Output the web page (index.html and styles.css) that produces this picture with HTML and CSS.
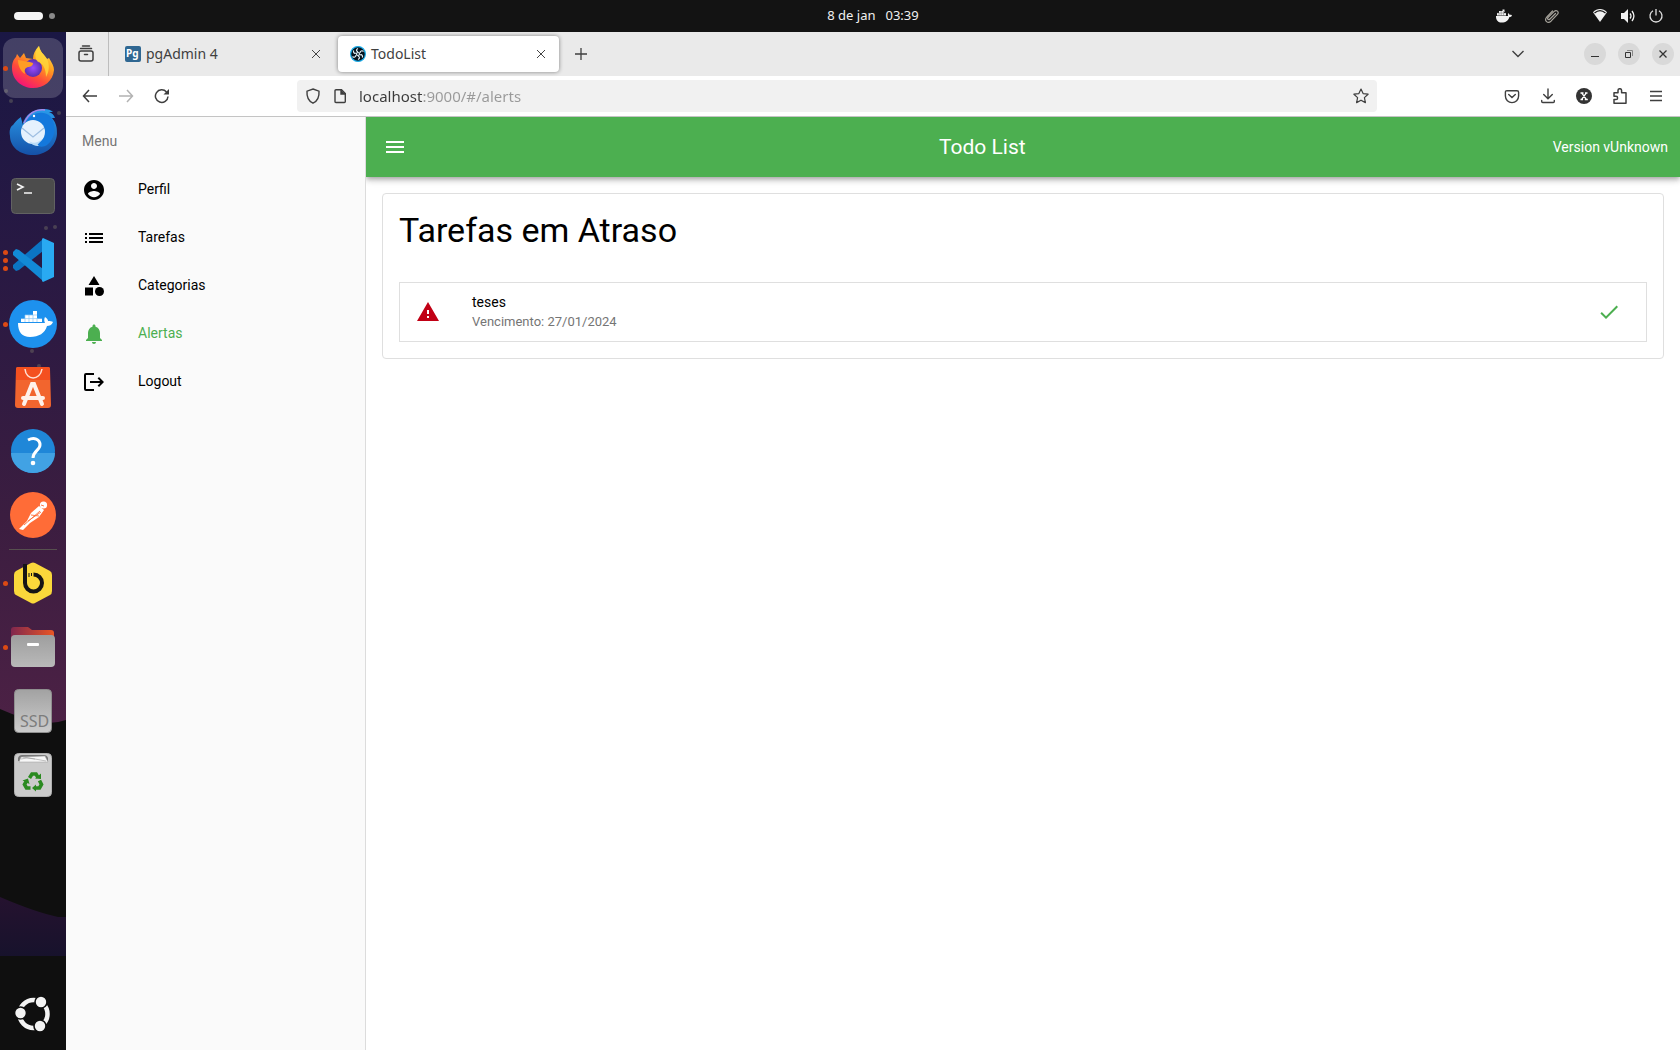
FILE: index.html
```html
<!DOCTYPE html>
<html lang="pt-BR">
<head>
<meta charset="utf-8">
<title>TodoList</title>
<link rel="stylesheet" href="styles.css">
</head>
<body>
<div class="desktop">
  <header class="panel">
    <button class="workspaces" aria-label="Atividades"><span class="pill"></span><span class="dot"></span></button>
    <button class="clock"><span>8 de jan</span><span>03:39</span></button>
    <div class="tray">
      <svg class="tray-docker" width="16" height="16" viewBox="0 0 16 16" fill="#f2f2f2"><path d="M0 8h12c0-1-.4-1.800.3-2.800.9.4 1.200 1 1.300 1.700.9-.1 1.800 0 2.400.5-.5 1.100-1.500 1.500-2.600 1.500C12.500 12 10 14.500 5.500 14.500 2 14.500-.2 12 0 8zM1 5h9v2.400H1zM3 3h5v2H3zM6.500 1.500h2V4h-2z"/><path d="M3 5v2.500M5.200 3v4.500M7.500 3v4.500M1 5h9" stroke="#555" stroke-width=".4"/></svg>
      <svg class="tray-clip" width="16" height="16" viewBox="0 0 16 16" fill="none" stroke="#a7a49c" stroke-width="1.200" stroke-linecap="round"><path d="M11.500 5.500L6 11c-1.500 1.500-3.200 0-1.800-1.600l6-6c2.200-2.200 5.300.6 3.200 3L7 13.200c-3.200 3-7.200-.5-4.300-4L8.500 3"/></svg>
      <svg class="tray-wifi" width="16" height="16" viewBox="0 0 16 16" fill="#f2f2f2"><path d="M1 4.300C5-.1 11-.1 15 4.300L8 14z"/><path d="M2.500 5C6 2 10 2 13.500 5" fill="none" stroke="#131313" stroke-width="1.200"/></svg>
      <svg class="tray-volume" width="16" height="16" viewBox="0 0 16 16" fill="#f2f2f2"><path d="M1 5h3l4-4v14l-4-4H1z"/><path d="M10 5.500q2 2.500 0 5M12 3q3.800 5 0 10" fill="none" stroke="#f2f2f2" stroke-width="1.300"/></svg>
      <svg width="16" height="16" viewBox="0 0 16 16" fill="none" stroke="#e0e0e0" stroke-width="1.300"><path d="M5 2.800a6 6 0 1 0 6 0M8 1v6.500"/></svg>
    </div>
  </header>

  <div class="workspace">
    <nav class="dock" aria-label="Dock">
      <svg class="wallpaper" viewBox="0 0 66 1018" preserveAspectRatio="none" aria-hidden="true">
        <defs>
          <linearGradient id="wall" x2="0" y2="1"><stop offset="0" stop-color="#1a1744"/><stop offset=".35" stop-color="#291943"/><stop offset=".7" stop-color="#3b1d40"/><stop offset="1" stop-color="#4c2145"/></linearGradient>
          <linearGradient id="wedge" x2="0" y2="1"><stop offset="0" stop-color="#25122f"/><stop offset="1" stop-color="#17122c"/></linearGradient>
        </defs>
        <path fill="#0f0f0f" d="M0 0h66v1018H0z"/>
        <path fill="url(#wall)" d="M0 0h66v688q-12 4-22 2Q22 687 0 677z"/>
        <path fill="url(#wedge)" d="M0 865q35 15 58 20h8v39H0z"/>
        <g fill="#8a8a70" opacity=".35"><circle cx="6" cy="59" r="2"/><circle cx="11" cy="69" r="2"/><circle cx="59" cy="81" r="2"/><circle cx="55" cy="195" r="2"/><circle cx="46" cy="196" r="2"/><circle cx="32" cy="319" r="2"/><circle cx="39" cy="334" r="2"/></g>
      </svg>
      <ul class="dock-list">
        <li><button class="app app-active" aria-label="Firefox"><span class="running"><i></i></span>
          <svg width="48" height="48" viewBox="0 0 48 48"><defs><linearGradient id="ff" x1=".9" y1="0" x2=".3" y2="1"><stop offset="0" stop-color="#fff44f"/><stop offset=".4" stop-color="#ffa01f"/><stop offset=".7" stop-color="#ff4b3a"/><stop offset="1" stop-color="#f2127a"/></linearGradient><radialGradient id="ffp"><stop offset="0" stop-color="#9a4bff"/><stop offset="1" stop-color="#5b2eaf"/></radialGradient></defs>
          <path fill="url(#ff)" d="M3 24c0-6 2-9 4-11l1-3 3 4 4-5 2 5 7 1c0-5 2-9 6-13 1 6 5 8 8 13l2-1c3 5 5 8 5 12-1 11-10 18-21 18S3 36 3 24z"/><circle cx="24" cy="24" r="9" fill="url(#ffp)"/><path fill="#ff9d25" d="M9 16c4 1 9 1 15 3 0 3-3 4-5 4-3 1-4 3-3 7-5-3-7-9-7-14z"/><path fill="#ffd83c" opacity=".8" d="M30 2c1 6 5 8 8 13 3 6 2 13-1 18 0-8-3-14-8-15-4-3-3-12 1-16z"/></svg></button></li>
        <li><button class="app" aria-label="Thunderbird">
          <svg width="50" height="50" viewBox="0 0 50 50"><defs><linearGradient id="tb" x2="0" y2="1"><stop offset="0" stop-color="#2a9bea"/><stop offset="1" stop-color="#1551a8"/></linearGradient></defs>
          <path fill="url(#tb)" d="M2 29c-1-5 0-9 3-11 2-3 4-5 8-8 0 3 2 4 1 8C18 7 25 2 36 2c4 0 7 1 9 3h-4c3 1 5 3 6 6h-3c5 6 5 11 5 16-1 13-12 21-24 21C12 48 2 40 2 29z"/><path fill="none" stroke="#a787e8" stroke-width="1.500" d="M16 16C21 6 27 2 37 3"/><path fill="#1478dc" d="M18 15c6-10 18-12 25-5 6 9 4 22-4 28-3 2-6 2-9 1l-8-18z"/><circle cx="25" cy="25" r="12" fill="#e5f1fd"/><path d="M14 21l11 9 11-9" fill="none" stroke="#9fbfe2" stroke-width="1.300"/><path fill="#b9dcf8" d="M21 34c4 3 9 2 13-2-3 6-6 5-3 7-5 0-8-2-10-5z"/><circle cx="26" cy="9" r="1.200" fill="#fff"/></svg></button></li>
        <li><button class="app" aria-label="Terminal">
          <svg width="48" height="48" viewBox="0 0 48 48"><rect x="2.500" y="6.500" width="43" height="35" rx="4" fill="#4c4c4c" stroke="#626262"/><path d="M8 12l6 3-6 3M15 21h8" fill="none" stroke="#f5f5f5" stroke-width="1.600"/></svg></button></li>
        <li><button class="app" aria-label="Visual Studio Code"><span class="running"><i></i><i></i><i></i></span>
          <svg width="48" height="48" viewBox="0 0 48 48"><path fill="#0b74c4" d="M34 3L4 29v3l3 3 3-1 24-19z"/><path fill="#128ad6" d="M34 45L4 19v-3l3-3 3 1 24 19z"/><path fill="#29aaf2" d="M33 3l1-1 11 5v34l-11 5-1-1z"/></svg></button></li>
        <li><button class="app" aria-label="Docker Desktop"><span class="running"><i></i></span>
          <svg width="48" height="48" viewBox="0 0 48 48"><circle cx="24" cy="24" r="24" fill="#1d91ee"/><path fill="#fff" d="M9 23h27c-1-2-1-4 0-6 2 1 3 3 3 4 2 0 4 0 5 1-1 3-4 4-6 4-2 7-8 11-17 11-8 0-12-5-12-14z"/><path fill="#fff" d="M12 19h4v3h-4zM16 15h4v7h-4zM20 15h4v7h-4zM24 11h4v11h-4zM28 19h5v3h-5z"/><path stroke="#8cc7f5" stroke-width=".7" d="M16 15v7M20 15v7M24 15v7M28 18v4M12 18.600h21M16 15h12"/></svg></button></li>
        <li><button class="app" aria-label="App Center">
          <svg width="48" height="48" viewBox="0 0 48 48"><path fill="#f2652e" d="M9 3h30q2 0 2 2l1 36q0 3-3 3H9q-3 0-3-3L7 5q0-2 2-2z"/><path fill="#f4501f" d="M9 3h30q2 0 2 2v11H7V5q0-2 2-2z"/><path d="M16 5c1 12 15 12 17 0" fill="none" stroke="#ffe1d4" stroke-width="1.500"/><path d="M15 40l8-20h2l8 20M14 34h20" fill="none" stroke="#fff1ea" stroke-width="4" stroke-linecap="round"/></svg></button></li>
        <li><button class="app" aria-label="Ajuda">
          <svg width="48" height="48" viewBox="0 0 48 48"><circle cx="24" cy="23" r="22" fill="#1f87d8"/><path fill="#41a2e4" d="M2 25h44a22 20 0 0 1-44 0z"/><path d="M19 12c6-3 12-1 12 5 0 5-7 6-7 13" fill="none" stroke="#fff" stroke-width="3"/><circle cx="24" cy="35" r="2.300" fill="#fff"/></svg></button></li>
        <li><button class="app" aria-label="Postman">
          <svg width="48" height="48" viewBox="0 0 48 48"><circle cx="24" cy="23" r="23" fill="#ff6c37"/><circle cx="34.500" cy="13" r="3.600" fill="#fff"/><path fill="#fff" d="M30 14l5 4-5 7-9 6-7 7-4-1 8-8 4-8z"/><path d="M15 33l16-14M19 29l13-9M22 23l8 1M32 13l3 1" stroke="#ff6c37" stroke-width=".9"/></svg></button></li>
      </ul>
      <hr class="dock-rule">
      <ul class="dock-list">
        <li><button class="app" aria-label="Beekeeper Studio"><span class="running"><i></i></span>
          <svg width="48" height="48" viewBox="0 0 48 48"><path fill="#fad83b" d="M22 4q2-1 4 0l15 8q2 1 2 4v16q0 3-2 4l-15 8q-2 1-4 0L7 36q-2-1-2-4V16q0-3 2-4z"/><path d="M16 5v19a8.500 8.500 0 1 0 8.500-8.500" fill="none" stroke="#151515" stroke-width="4"/><path d="M20 14v4M22.500 14v3" stroke="#151515"/></svg></button></li>
        <li><button class="app" aria-label="Arquivos"><span class="running"><i></i></span>
          <svg width="48" height="48" viewBox="0 0 48 48"><defs><linearGradient id="fo"><stop offset="0" stop-color="#80274e"/><stop offset="1" stop-color="#ea5625"/></linearGradient><linearGradient id="gr" x2="0" y2="1"><stop offset="0" stop-color="#9e9e9e"/><stop offset="1" stop-color="#b9b9b9"/></linearGradient></defs><path fill="url(#fo)" d="M2 7q0-3 3-3h14l4 3h19q3 0 3 3v10H2z"/><rect x="2" y="12" width="44" height="32" rx="4" fill="url(#gr)"/><rect x="18" y="20" width="12" height="3" rx="1" fill="#fff"/></svg></button></li>
        <li><button class="app" aria-label="Disco SSD">
          <svg width="48" height="48" viewBox="0 0 48 48"><defs><linearGradient id="ssd" x2="0" y2="1"><stop offset="0" stop-color="#a2a2a2"/><stop offset="1" stop-color="#cccccc"/></linearGradient></defs><rect x="5.500" y="2.500" width="37" height="43" rx="4" fill="url(#ssd)" stroke="#8f8f8f"/><text x="11" y="40" class="ssd-label">SSD</text></svg></button></li>
        <li><button class="app" aria-label="Lixeira">
          <svg width="48" height="48" viewBox="0 0 48 48"><rect x="5.500" y="2.500" width="37" height="43" rx="4" fill="#cbcbcb" stroke="#b0b0b0"/><path fill="#777" d="M9 7q1-3 4-3h22q3 0 4 3v3H9z"/><path fill="#f7f7f7" stroke="#999" stroke-width=".5" d="M10 11l2-5 24-1 3 6z"/><path d="M14 6l12 2 11 2M12 8q5-2 14 0" fill="none" stroke="#999" stroke-width=".6"/><g fill="none" stroke="#2a8a20" stroke-width="3.600"><path d="M20.500 27l2.500-4h4l2 3.500M30.500 29.500l2 4-2 3.500h-4M21.500 37h-4l-2-3.500 2-3.500"/></g><path fill="#2a8a20" d="M26 27.500l6 .5v-5.500zM27 33.500v7l-4-3.500zM13.500 29.500l5.500-2 1.500 5.500z"/></svg></button></li>
      </ul>
      <button class="app show-apps" aria-label="Mostrar aplicativos">
        <svg width="40" height="40" viewBox="0 0 40 40"><circle cx="20.500" cy="20" r="14" fill="none" stroke="#f3f3f3" stroke-width="4.500"/><g fill="#f3f3f3" stroke="#0f0f0f" stroke-width="1.600"><circle cx="7.500" cy="19" r="6"/><circle cx="28" cy="8" r="6"/><circle cx="27" cy="32" r="6"/></g></svg></button>
    </nav>

    <div class="browser">
      <div class="tabstrip">
        <button class="view" aria-label="Firefox View"><svg width="18" height="18" viewBox="0 0 18 18" fill="none" stroke="#3f3f3f" stroke-width="1.500" stroke-linecap="round"><rect x="2" y="6" width="14" height="10" rx="2"/><path d="M3.500 3.500h11M5.500 1h7M7.500 9.500h3"/></svg></button>
        <div class="tabs">
          <div class="tab">
            <svg width="16" height="16" viewBox="0 0 16 16"><rect width="16" height="16" rx="2" fill="#2f6792"/><text x="1" y="11" class="pg-label">Pg</text></svg>
            <a class="tab-title" href="#pgadmin">pgAdmin 4</a>
            <button class="tab-close" aria-label="Fechar aba"><svg width="10" height="10" viewBox="0 0 10 10" stroke="#444" stroke-width="1"><path d="M1 1l8 8M9 1L1 9"/></svg></button>
          </div>
          <div class="tab tab-current">
            <svg width="16" height="16" viewBox="0 0 16 16"><circle cx="8" cy="8" r="7.400" fill="#07121c" stroke="#1badea" stroke-width="1.200"/><g fill="none" stroke="#e2f2fa" stroke-width="1.200"><circle cx="8" cy="8" r="1.500"/><path d="M8 6C6 5 6 3.500 8 2.500M10 7c0-2 2-3 3.500-1.500M10 9c2-1 3 1 2.300 2.500M8 10c2 1 2 2.500 0 3.500M6 9c0 2-2 3-3.500 1.500M6 7C4 8 3 6 3.700 4.500"/></g></svg>
            <a class="tab-title" href="#/alerts">TodoList</a>
            <button class="tab-close" aria-label="Fechar aba"><svg width="10" height="10" viewBox="0 0 10 10" stroke="#444" stroke-width="1"><path d="M1 1l8 8M9 1L1 9"/></svg></button>
          </div>
          <button class="new-tab" aria-label="Nova aba"><svg width="12" height="12" viewBox="0 0 12 12" stroke="#3f3f3f" stroke-width="1.300"><path d="M6 0v12M0 6h12"/></svg></button>
        </div>
        <button class="all-tabs" aria-label="Listar abas"><svg width="14" height="8" viewBox="0 0 14 8" fill="none" stroke="#3f3f3f" stroke-width="1.400"><path d="M1.500 1L7 6.500 12.500 1"/></svg></button>
        <div class="window-buttons">
          <button aria-label="Minimizar"><svg width="10" height="10" viewBox="0 0 10 10"><path d="M1 7.500h8" stroke="#333"/></svg></button>
          <button aria-label="Restaurar"><svg width="10" height="10" viewBox="0 0 10 10" fill="none" stroke="#333"><path d="M3 1.500h5.500V7" stroke="#888"/><path d="M1.500 3.500h5v5h-5z"/></svg></button>
          <button aria-label="Fechar"><svg width="10" height="10" viewBox="0 0 10 10" stroke="#333" stroke-width="1.300"><path d="M1.500 1.500l7 7M8.500 1.500l-7 7"/></svg></button>
        </div>
      </div>

      <div class="toolbar">
        <button class="tool" aria-label="Voltar"><svg width="16" height="16" viewBox="0 0 16 16" fill="none" stroke="#3f3f3f" stroke-width="1.500"><path d="M15 8H1.500M7 2L1.500 8 7 14"/></svg></button>
        <button class="tool" aria-label="Avançar" disabled><svg width="16" height="16" viewBox="0 0 16 16" fill="none" stroke="#b3b3b3" stroke-width="1.500"><path d="M1 8h13.500M9 2l5.500 6L9 14"/></svg></button>
        <button class="tool" aria-label="Recarregar"><svg width="16" height="16" viewBox="0 0 16 16" fill="none" stroke="#3f3f3f" stroke-width="1.500"><path d="M14 8.500A6.300 6.300 0 1 1 12.500 4"/><path d="M15 1v5.500H9.500z" fill="#3f3f3f" stroke="none"/></svg></button>
        <div class="urlbar">
          <svg width="16" height="16" viewBox="0 0 16 16" fill="none" stroke="#3f3f3f" stroke-width="1.400"><path d="M8 1l6 2.200c.4 5.300-1.500 9.800-6 12-4.500-2.200-6.400-6.700-6-12z"/></svg>
          <svg width="16" height="16" viewBox="0 0 16 16" fill="none" stroke="#3f3f3f" stroke-width="1.400"><path d="M4 1.700h5.500L13.300 5.500v8q0 1-1 1H4q-1 0-1-1V2.700q0-1 1-1z"/><path d="M9 2v4h4.300" fill="#3f3f3f"/></svg>
          <input class="url" type="text" value="localhost:9000/#/alerts" aria-label="Endereço">
          <svg width="16" height="16" viewBox="0 0 16 16" fill="none" stroke="#3f3f3f" stroke-width="1.200" stroke-linejoin="round"><path d="M8 1l2.100 4.600 5 .6-3.700 3.400 1 5L8 12.200l-4.400 2.400 1-5L.9 6.200l5-.6z"/></svg>
        </div>
        <button class="tool" aria-label="Pocket"><svg width="16" height="16" viewBox="0 0 16 16" fill="none" stroke="#3f3f3f" stroke-width="1.400" stroke-linecap="round"><path d="M3 2.700h10q1.600 0 1.600 1.500V8a6.600 6.600 0 0 1-13.200 0V4.200Q1.400 2.700 3 2.700zM4.700 6.500L8 9.500l3.300-3"/></svg></button>
        <button class="tool" aria-label="Downloads"><svg width="16" height="16" viewBox="0 0 16 16" fill="none" stroke="#3f3f3f" stroke-width="1.400" stroke-linecap="round"><path d="M8 1v9.500M3.700 6.500L8 10.700l4.300-4.200M1.700 12.500v1q0 1 1 1h10.600q1 0 1-1v-1"/></svg></button>
        <button class="tool" aria-label="Extensão X"><svg width="16" height="16" viewBox="0 0 16 16"><circle cx="8" cy="8" r="8" fill="#333"/><path d="M5.500 4.700l5 7M10.500 4.700l-5 7M4.500 5h3M9 5h2.500M4.500 11.500h2.500M8.800 11.500h3" stroke="#fff" stroke-width="1.300"/></svg></button>
        <button class="tool" aria-label="Extensões"><svg width="16" height="16" viewBox="0 0 16 16" fill="none" stroke="#3f3f3f" stroke-width="1.500" stroke-linejoin="round"><path d="M2 4.800h4V2.500a1.800 1.800 0 0 1 3.600 0v2.300H14v10.400H2V11.500h2a1.600 1.600 0 0 0 0-3.200H2z"/></svg></button>
        <button class="tool" aria-label="Menu do Firefox"><svg width="16" height="16" viewBox="0 0 16 16" stroke="#3f3f3f" stroke-width="1.300"><path d="M2 3.500h12M2 8h12M2 12.500h12"/></svg></button>
      </div>

      <div class="page">
        <aside class="drawer">
          <h2 class="drawer-title">Menu</h2>
          <nav>
            <a class="item" href="#/profile"><svg class="md" viewBox="0 0 24 24"><path d="M12 2C6.480 2 2 6.480 2 12s4.480 10 10 10 10-4.480 10-10S17.520 2 12 2zm0 3c1.660 0 3 1.340 3 3s-1.340 3-3 3-3-1.340-3-3 1.340-3 3-3zm0 14.200c-2.500 0-4.710-1.280-6-3.220.03-1.990 4-3.080 6-3.080 1.990 0 5.970 1.090 6 3.080-1.290 1.940-3.500 3.220-6 3.220z"/></svg><span>Perfil</span></a>
            <a class="item" href="#/tasks"><svg class="md" viewBox="0 0 24 24"><path d="M3 13h2v-2H3v2zm0 4h2v-2H3v2zm0-8h2V7H3v2zm4 4h14v-2H7v2zm0 4h14v-2H7v2zM7 7v2h14V7H7z"/></svg><span>Tarefas</span></a>
            <a class="item" href="#/categories"><svg class="md" viewBox="0 0 24 24"><path d="M12 2l-5.500 9h11zM3 13.500h8v8H3z"/><circle cx="17.500" cy="17.500" r="4.500"/></svg><span>Categorias</span></a>
            <a class="item item-current" href="#/alerts"><svg class="md" viewBox="0 0 24 24"><path d="M12 22c1.100 0 2-.9 2-2h-4c0 1.100.89 2 2 2zm6-6v-5c0-3.070-1.640-5.640-4.500-6.320V4c0-.83-.67-1.500-1.500-1.500s-1.500.67-1.500 1.500v.68C7.630 5.360 6 7.920 6 11v5l-2 2v1h16v-1l-2-2z"/></svg><span>Alertas</span></a>
            <a class="item" href="#/logout"><svg class="md" viewBox="0 0 24 24"><path d="M4 3h8v2H4v14h8v2H4q-2 0-2-2V5q0-2 2-2zM8 11h10.200l-2.600-2.600L17 7l5 5-5 5-1.400-1.400 2.600-2.600H8z"/></svg><span>Logout</span></a>
          </nav>
        </aside>
        <div class="app-body">
          <header class="app-header">
            <button class="menu-button" aria-label="Menu"><svg width="24" height="24" viewBox="0 0 24 24" fill="#fff"><path d="M3 18h18v-2H3v2zm0-5h18v-2H3v2zm0-7v2h18V6H3z"/></svg></button>
            <div class="app-title">Todo List</div>
            <div class="version">Version vUnknown</div>
          </header>
          <main class="content">
            <section class="card">
              <h1 class="card-title">Tarefas em Atraso</h1>
              <ul class="tasks">
                <li class="task">
                  <svg class="warning" width="24" height="24" viewBox="0 0 24 24"><path d="M1 21h22L12 2 1 21zm12-3h-2v-2h2v2zm0-4h-2v-4h2v4z"/></svg>
                  <div class="task-text"><div class="task-name">teses</div><div class="task-due">Vencimento: 27/01/2024</div></div>
                  <button class="done" aria-label="Concluir"><svg width="24" height="24" viewBox="0 0 24 24" fill="#4caf50"><path d="M9 16.170L4.830 12l-1.420 1.410L9 19 21 7l-1.410-1.410z"/></svg></button>
                </li>
              </ul>
            </section>
          </main>
        </div>
      </div>
    </div>
  </div>
</div>
</body>
</html>
```
FILE: styles.css
```css
* { box-sizing: border-box; }
body { margin: 0; font-family: Roboto, "Liberation Sans", sans-serif; font-size: 14px; color: #000; }
button { margin: 0; padding: 0; border: 0; background: none; font: inherit; color: inherit; display: flex; align-items: center; justify-content: center; }
ul { list-style: none; margin: 0; padding: 0; }
h1, h2 { margin: 0; font-weight: 400; }
a { color: inherit; text-decoration: none; }
svg { flex: none; display: block; }

.desktop { min-height: 100vh; display: flex; flex-direction: column; background: #0f0f0f; }

/* Top panel */
.panel { height: 32px; background: #131313; color: #f0f0f0; display: flex; align-items: center; font-family: "Noto Sans", sans-serif; font-size: 13px; }
.workspaces { width: 68px; height: 32px; gap: 6px; }
.pill { width: 29px; height: 8px; border-radius: 4px; background: #f5f5f5; }
.dot { width: 6px; height: 6px; border-radius: 50%; background: #8a8a8a; }
.clock { flex: 1; gap: 10px; padding-left: 192px; height: 30px; padding-bottom: 2px; }
.tray { width: 194px; padding-right: 16px; display: flex; justify-content: flex-end; }
.tray-docker { margin-right: 32px; }
.tray-clip { margin-right: 32px; }
.tray-wifi, .tray-volume { margin-right: 12px; }

/* Dock */
.workspace { flex: 1; display: flex; }
.dock { position: relative; width: 66px; flex: none; display: flex; flex-direction: column; align-items: center; padding: 6px 0; }
.wallpaper { position: absolute; inset: 0; width: 100%; height: 100%; }
.dock-list { position: relative; display: flex; flex-direction: column; gap: 4px; }
.app { position: relative; width: 60px; height: 60px; border-radius: 12px; }
.app-active { background: rgba(255, 255, 255, 0.18); }
.running { position: absolute; left: 0; top: 0; height: 100%; display: flex; flex-direction: column; justify-content: center; gap: 3px; }
.running i { width: 5px; height: 5px; border-radius: 50%; background: #dc4a14; }
.dock-rule { position: relative; width: 48px; height: 1px; margin: 3px 0; border: 0; background: #57504f; }
.ssd-label { font-family: "Noto Sans", sans-serif; font-size: 16px; fill: #7c7c7c; }
.show-apps { margin-top: auto; }

/* Browser */
.browser { flex: 1; min-width: 0; display: flex; flex-direction: column; background: #fff; font-family: "Noto Sans", sans-serif; }
.tabstrip { height: 44px; background: #eaeaea; display: flex; align-items: center; padding-right: 6px; color: #3f3f3f; }
.view { width: 43px; height: 44px; border-right: 1px solid #bdbdbd; padding-right: 2px; }
.tabs { flex: 1; display: flex; gap: 4px; padding-left: 4px; align-items: center; }
.tab { width: 221px; height: 36px; border-radius: 4px; padding: 0 6px 0 12px; display: flex; align-items: center; gap: 5px; }
.tab-current { background: #fff; box-shadow: 0 0 4px rgba(0, 0, 0, 0.45); }
.tab-title { flex: 1; padding-bottom: 2px; }
.tab-close { width: 24px; height: 24px; }
.new-tab { width: 36px; height: 36px; }
.all-tabs { width: 32px; height: 32px; margin-right: 50px; }
.window-buttons { display: flex; gap: 12px; }
.window-buttons button { width: 22px; height: 22px; border-radius: 50%; background: #d9d9d9; }
.pg-label { font-family: "Noto Sans", sans-serif; font-size: 10px; font-weight: 700; fill: #fff; }

.toolbar { height: 41px; padding: 0 8px; border-bottom: 1px solid #c4c4c4; display: flex; align-items: center; gap: 4px; }
.tool { width: 32px; height: 32px; }
.urlbar { flex: 1; max-width: 1080px; height: 32px; margin: 0 auto; padding: 0 8px; border-radius: 4px; background: #f1f1f1; display: flex; align-items: center; gap: 11px; }
.url { flex: 1; min-width: 0; padding: 0; border: 0; outline: 0; font-family: "Noto Sans", sans-serif; font-size: 15px; line-height: 20px; color: transparent; background: linear-gradient(to right, #3a3a3a 64px, #999 64px) text; }

/* Application */
.page { flex: 1; display: flex; font-family: Roboto, "Liberation Sans", sans-serif; }
.drawer { width: 300px; flex: none; background: #fafafa; border-right: 1px solid #dcdcdc; }
.drawer-title { height: 48px; padding: 0 16px; font-size: 14px; line-height: 48px; color: #757575; }
.item { height: 48px; padding: 0 16px; display: flex; align-items: center; gap: 32px; }
.item-current { color: #4caf50; }
.md { width: 24px; height: 24px; fill: currentColor; margin-top: 2px; }
.app-body { flex: 1; min-width: 0; overflow: hidden; }
.app-header { height: 60px; padding: 0 12px; background: #4caf50; color: #fff; display: flex; align-items: center; box-shadow: 0 2px 4px -1px rgba(0, 0, 0, 0.2), 0 4px 5px rgba(0, 0, 0, 0.14), 0 1px 10px rgba(0, 0, 0, 0.12); }
.menu-button { width: 34px; height: 34px; }
.app-title { flex: 1; text-align: center; font-size: 21px; }
.content { padding: 16px; }
.card { padding: 16px; border: 1px solid #dfdfdf; border-radius: 4px; }
.card-title { font-size: 34px; line-height: 40px; margin-bottom: 32px; }
.task { height: 60px; padding: 0 16px; border: 1px solid #dfdfdf; display: flex; align-items: center; }
.warning { fill: #c10015; margin-right: 32px; }
.task-text { flex: 1; }
.task-name { line-height: 20px; }
.task-due { font-size: 13px; line-height: 20px; color: #757575; }
.done { width: 42px; height: 40px; }
```
